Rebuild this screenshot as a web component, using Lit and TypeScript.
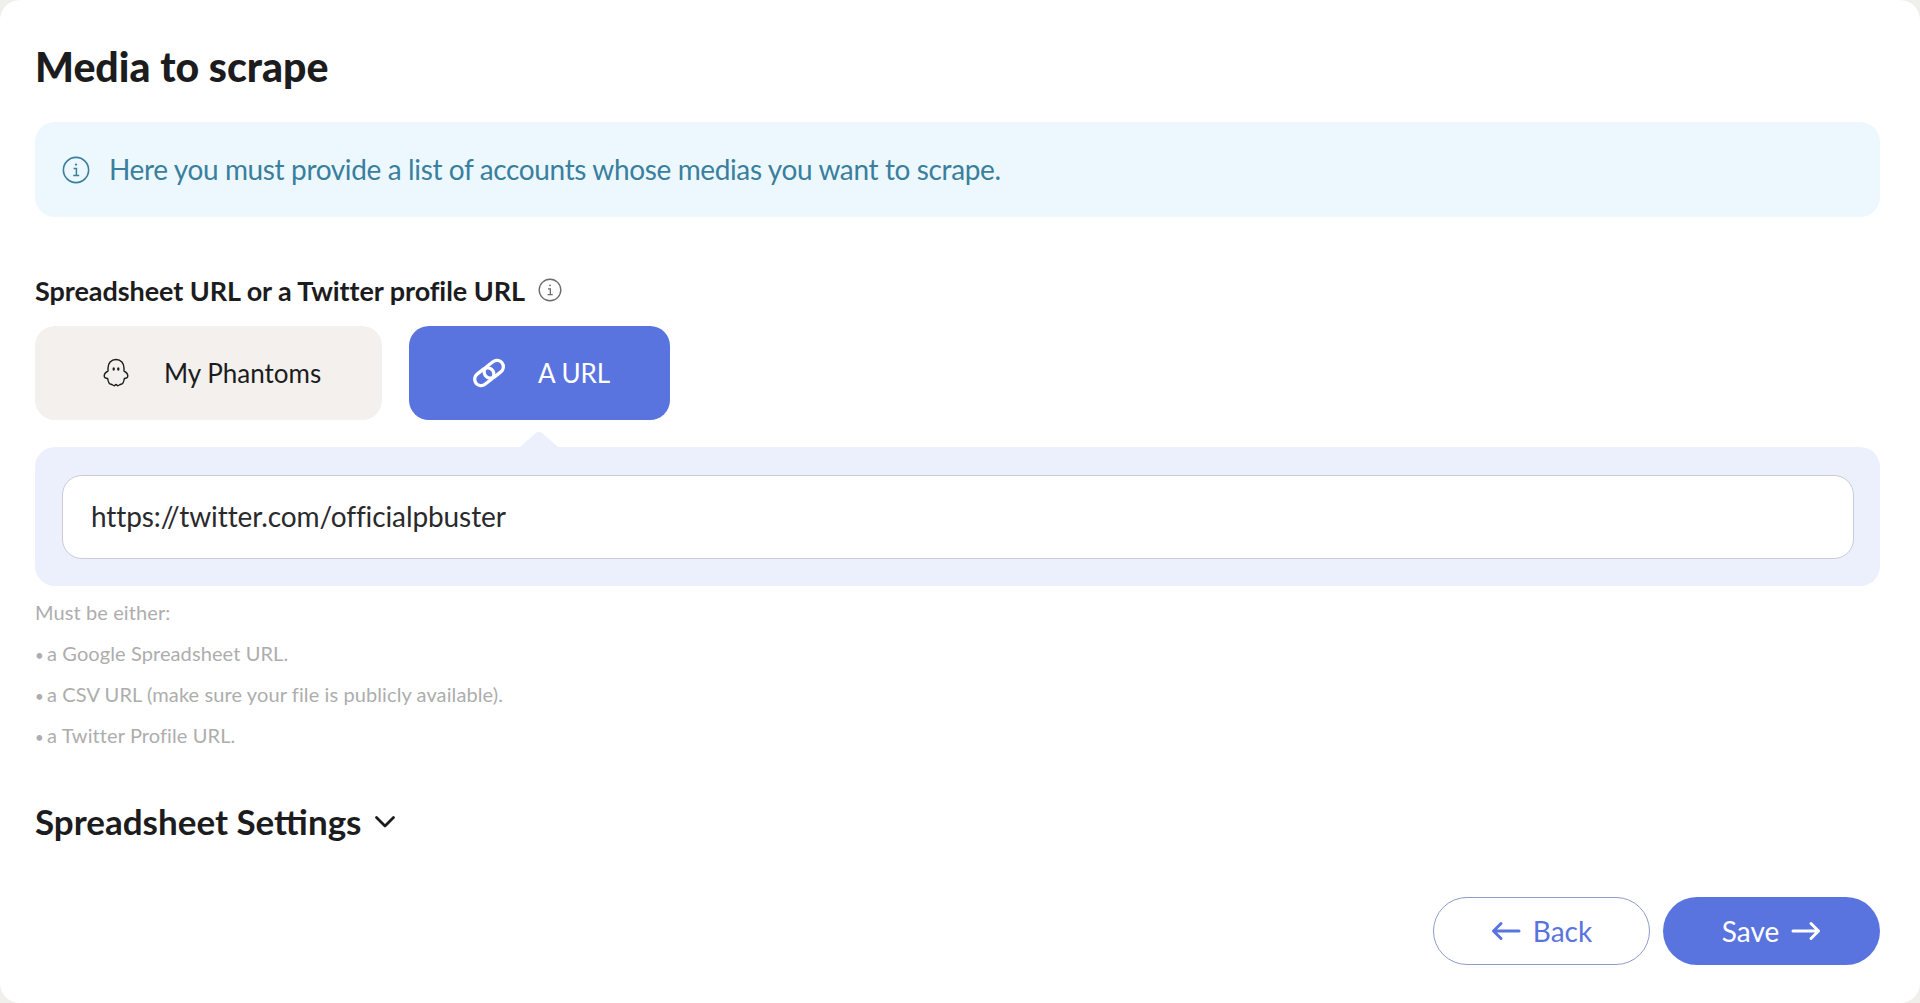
import { LitElement, html, css } from "lit";
import { customElement } from "lit/decorators.js";

const info = (size: number) => html`<svg class="info" width=${size} height=${size} viewBox="0 0 28 28" fill="none" stroke="currentColor">
  <circle cx="14" cy="14" r="12.6" stroke-width="1.6"></circle>
  <path d="M11.6 12.6h2.800v6.600M11.200 19.400h6" stroke-width="1.500"></path>
  <circle cx="14" cy="8.600" r="1.100" fill="currentColor" stroke="none"></circle>
</svg>`;

@customElement("app-root")
export class AppRoot extends LitElement {
  static styles = css`
    :host { display: block; height: 1003px; background: #f1efec; font-family: Lato, "Liberation Sans", sans-serif; color: #1c1c1e; overflow: hidden; }
    .card { height: 1003px; box-sizing: border-box; background: #fff; border-radius: 20px; padding: 42px 40px 38px 35px; display: flex; flex-direction: column; }
    h1 { margin: 0 0 30px; font-size: 41px; line-height: 50px; font-weight: 900; letter-spacing: 0; }
    .banner { height: 95px; flex: none; box-sizing: border-box; background: #ecf8fd; border-radius: 20px; color: #3a7f9e; display: flex; align-items: center; gap: 19px; padding-left: 27px; font-size: 28px; letter-spacing: -0.37px; }
    .banner span { padding-bottom: 2px; }
    .label { margin: 55px 0 0; height: 36px; display: flex; align-items: center; gap: 13px; font-size: 27px; font-weight: 700; letter-spacing: -0.06px; }
    .label .info { color: #6b6b6b; }
    .tabs { display: flex; gap: 27px; margin-top: 18px; }
    .tab { height: 94px; border-radius: 20px; display: flex; align-items: center; font-size: 26px; box-sizing: border-box; }
    .tab.a { width: 347px; background: #f3f0ed; padding-left: 66px; gap: 33px; }
    .tab.b { width: 261px; background: #5974de; color: #fff; padding-left: 62px; gap: 31px; }
    .panel { position: relative; margin-top: 27px; height: 139px; flex: none; box-sizing: border-box; padding: 28px 26px 27px 27px; background: #ecf0fc; border-radius: 20px; }
    .notch { position: absolute; left: 485px; top: -16px; width: 38px; height: 16px; }
    .input { height: 84px; box-sizing: border-box; background: #fff; border: 1px solid #c9ccd6; border-radius: 20px; display: flex; align-items: center; padding: 0 0 2px 28px; font-size: 28px; color: #2a2a2c; letter-spacing: -0.1px; }
    .help { margin-top: 6px; color: #adadad; font-size: 20px; letter-spacing: 0.1px; }
    .help div { height: 41px; line-height: 41px; }
    .dot { font-size: 15px; margin-right: -2px; }
    .settings { margin-top: 43px; display: flex; align-items: center; gap: 12px; font-size: 35px; font-weight: 700; line-height: 44px; }
    .chev { margin-top: 2px; }
    .actions { margin-top: auto; display: flex; justify-content: flex-end; gap: 13px; }
    .btn { width: 217px; height: 68px; box-sizing: border-box; border-radius: 34px; display: flex; align-items: center; justify-content: center; gap: 12px; font-size: 28px; }
    .btn.back { background: #fff; border: 1px solid #8c9cc8; color: #5974de; }
    .btn.save { background: #5974de; color: #fff; }
  `;

  render() {
    return html`<div class="card">
      <h1>Media to scrape</h1>
      <div class="banner">${info(28)}<span>Here you must provide a list of accounts whose medias you want to scrape.</span></div>
      <div class="label"><span>Spreadsheet URL or a Twitter profile URL</span>${info(24)}</div>
      <div class="tabs">
        <div class="tab a">
          <svg width="30" height="30" viewBox="0 0 30 30" fill="none" stroke="#1c1c1e" stroke-width="1.400" stroke-linejoin="round">
            <path d="M15 1.500C10 1.500 7 5.500 7 10v3c-1.800.9-3.800 2.800-3.800 5 0 1.800 1.800 2.600 3.500 2.500.3 2.400 1 5.600 3.300 5.800 1.400.1 2 1.400 3.200 1.400 .9 0 1.100-1.200 1.800-1.200s.9 1.200 1.800 1.200c1.200 0 1.800-1.300 3.200-1.400 2.300-.2 3-3.400 3.300-5.800 1.700.1 3.500-.7 3.500-2.500 0-2.200-2-4.100-3.800-5v-3c0-4.500-3-8.500-8-8.500z"></path>
            <ellipse cx="12.700" cy="11" rx="1.200" ry="1.800" fill="#1c1c1e" stroke="none"></ellipse>
            <ellipse cx="17.300" cy="11" rx="1.200" ry="1.800" fill="#1c1c1e" stroke="none"></ellipse>
          </svg>
          <span>My Phantoms</span>
        </div>
        <div class="tab b">
          <svg width="36" height="36" viewBox="0 0 24 24" fill="none" stroke="#fff" stroke-width="2.200">
            <g transform="rotate(-38 12 12)">
              <rect x="1" y="7.700" width="14" height="8.600" rx="4.300"></rect>
              <rect x="9" y="7.700" width="14" height="8.600" rx="4.300"></rect>
            </g>
          </svg>
          <span>A URL</span>
        </div>
      </div>
      <div class="panel">
        <svg class="notch" viewBox="0 0 38 16"><path d="M0 16 L16 2 Q19 -.5 22 2 L38 16Z" fill="#ecf0fc"></path></svg>
        <div class="input">https://twitter.com/officialpbuster</div>
      </div>
      <div class="help">
        <div>Must be either:</div>
        <div><span class="dot">•</span> a Google Spreadsheet URL.</div>
        <div><span class="dot">•</span> a CSV URL (make sure your file is publicly available).</div>
        <div><span class="dot">•</span> a Twitter Profile URL.</div>
      </div>
      <div class="settings"><span>Spreadsheet Settings</span>
        <svg class="chev" width="22" height="16" viewBox="0 0 22 16" fill="none" stroke="#1c1c1e" stroke-width="2.800" stroke-linecap="round" stroke-linejoin="round"><path d="M2.500 3.500l8.500 8.500 8.500-8.500"></path></svg>
      </div>
      <div class="actions">
        <div class="btn back">
          <svg width="30" height="20" viewBox="0 0 30 20" fill="none" stroke="currentColor" stroke-width="3" stroke-linecap="round" stroke-linejoin="round"><path d="M28 10H3M10 2.500 2.500 10l7.500 7.500"></path></svg>
          <span>Back</span>
        </div>
        <div class="btn save">
          <span>Save</span>
          <svg width="30" height="20" viewBox="0 0 30 20" fill="none" stroke="currentColor" stroke-width="3" stroke-linecap="round" stroke-linejoin="round"><path d="M2 10h25M20 2.500 27.500 10 20 17.500"></path></svg>
        </div>
      </div>
    </div>`;
  }
}
